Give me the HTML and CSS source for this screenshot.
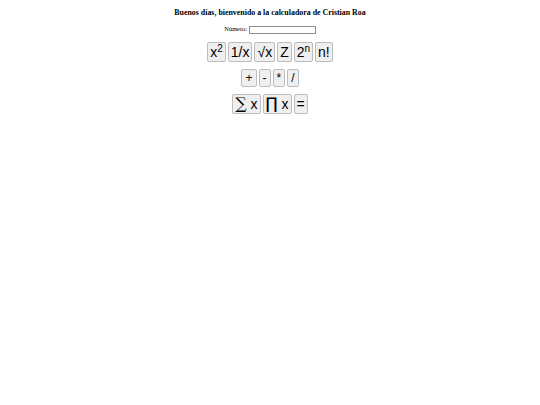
FILE: index.html
```html
<!DOCTYPE html>
<html lang="es">
<head>
<meta charset="utf-8">
<title>Calculadora</title>
<link rel="stylesheet" href="styles.css">
</head>
<body>
<h1 class="title">Buenos días, bienvenido a la calculadora de Cristian Roa</h1>
<div class="field">
  <label for="num">Número:</label>
  <input id="num" type="text" class="num-input">
</div>
<div class="row">
  <button class="btn">x<sup>2</sup></button>
  <button class="btn">1/x</button>
  <button class="btn">√x</button>
  <button class="btn">Z</button>
  <button class="btn">2<sup>n</sup></button>
  <button class="btn">n!</button>
</div>
<div class="row">
  <button class="btn btn-sm">+</button>
  <button class="btn btn-sm">-</button>
  <button class="btn btn-sm">*</button>
  <button class="btn btn-sm">/</button>
</div>
<div class="row">
  <button class="btn"><span class="sum">∑</span> x</button>
  <button class="btn"><span class="prod">∏</span> x</button>
  <button class="btn">=</button>
</div>
</body>
</html>
```
FILE: styles.css
```css
body {
  margin: 8px;
  background: #fff;
  color: #000;
  font-family: "Liberation Serif", serif;
  text-align: center;
}
.title {
  font-size: 7.9px;
  font-weight: bold;
  margin: 0 0 7px 0;
  line-height: 9px;
}
.field {
  font-size: 6.4px;
  line-height: 10px;
  margin-bottom: 8px;
}
.num-input {
  width: 63px;
  height: 6px;
  padding: 0 1px;
  border: 1px solid #8f8f8f;
  vertical-align: middle;
  font-size: 6px;
}
.row {
  margin-bottom: 7px;
  font-size: 0;
}
.btn {
  font-family: "Liberation Sans", Arial, sans-serif;
  font-size: 14px;
  line-height: 16px;
  padding: 1px 2px;
  margin: 0 1px;
  background: #efefef;
  border: 1px solid #bdbdbd;
  border-radius: 2px;
  color: #000;
  vertical-align: top;
}
.btn-sm {
  font-size: 12px;
  line-height: 16px;
  padding: 0 3px;
}
.btn sup {
  font-size: 10px;
  line-height: 0;
  vertical-align: 5px;
}
.sum {
  font-family: "DejaVu Serif", serif;
  font-size: 16px;
  font-weight: 200;
}
.prod {
  font-family: "DejaVu Sans", sans-serif;
  font-size: 16px;
}
```
